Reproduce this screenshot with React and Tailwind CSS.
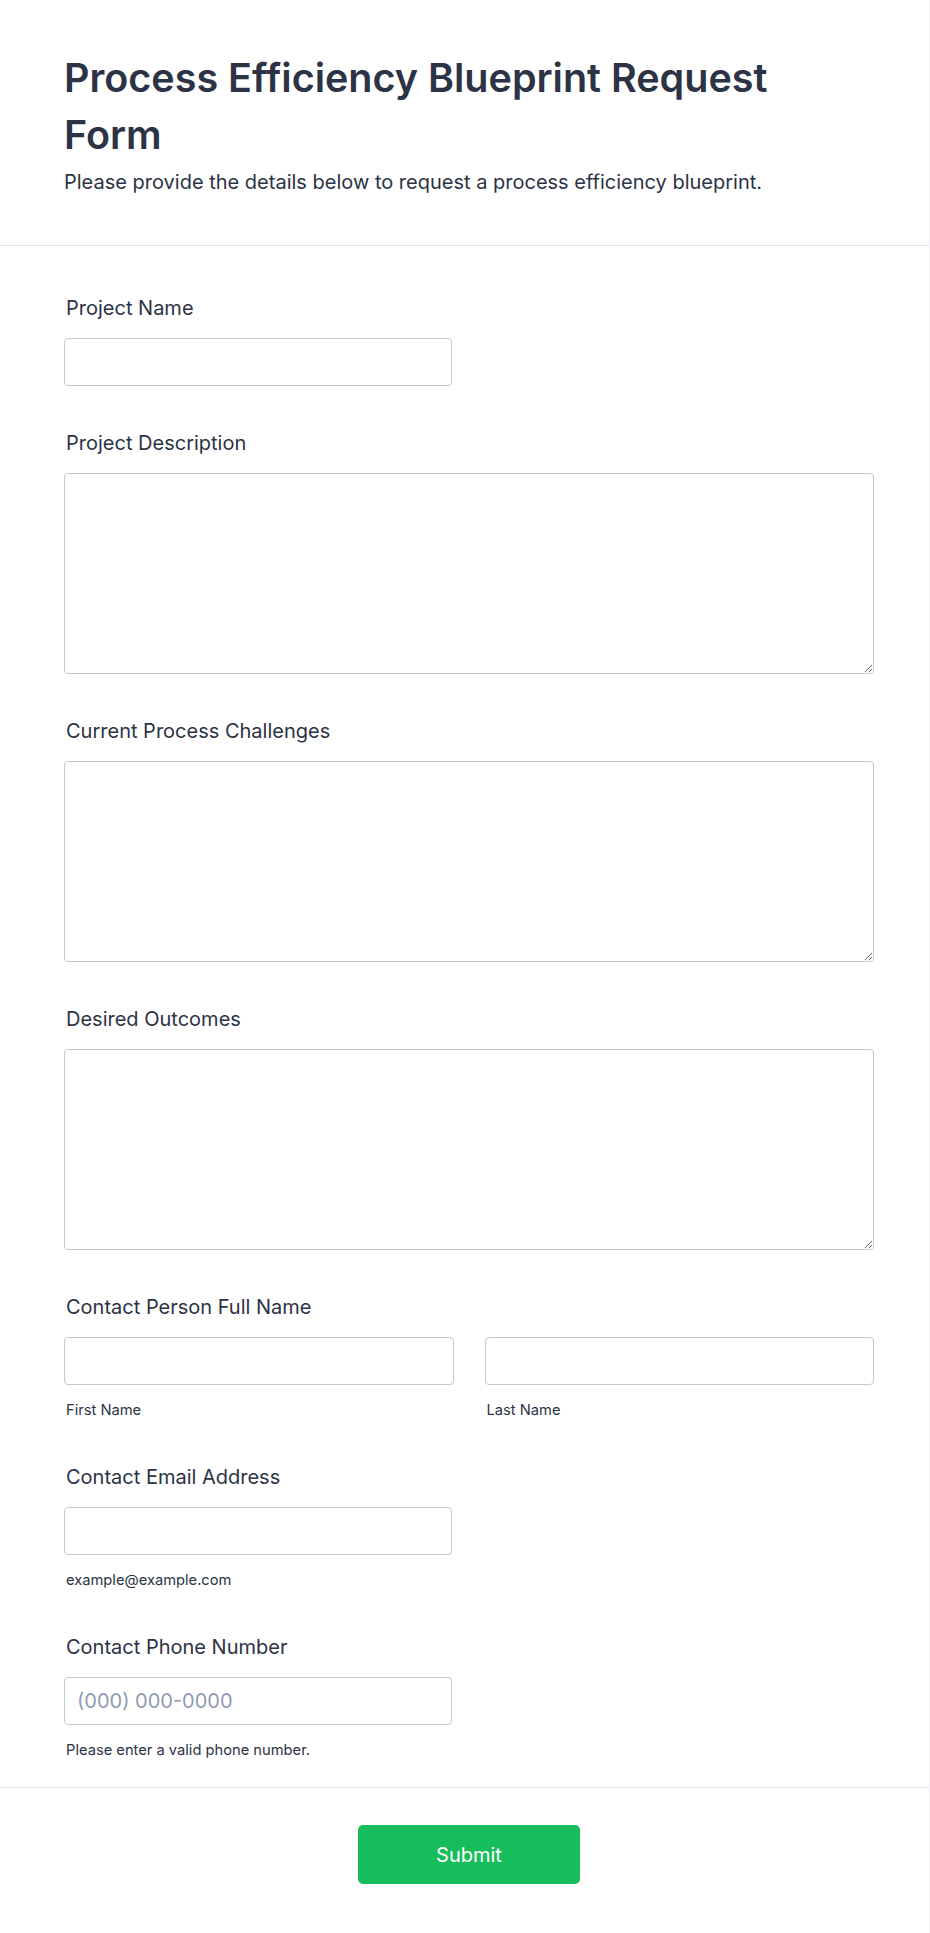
import React from "react";

const font = { fontFamily: "Inter, 'Noto Sans', sans-serif" };

function Label({ children }) {
  return (
    <label className="block pl-[2px] text-[20px] leading-[24px] font-normal text-[#2c3345]">
      {children}
    </label>
  );
}

function Sub({ children }) {
  return (
    <div className="mt-[15px] pl-[2px] text-[14.7px] leading-[20px] text-[#2c3345]">
      {children}
    </div>
  );
}

const inputCls =
  "block h-[48px] rounded-[4px] border border-[#c3c8d4] bg-white px-[12px] text-[20px] text-[#2c3345] outline-none placeholder:text-[#8f9bb3]";

const areaCls =
  "block h-[201px] w-full rounded-[4px] border border-[#c3c8d4] bg-white px-[12px] py-[10px] text-[18px] text-[#2c3345] outline-none";

export default function App() {
  return (
    <div className="min-h-[1933px] w-full bg-white border-r border-b border-[#eef0f5]" style={font}>
      <header className="px-[64px] pt-[50px] pb-[49px] border-b border-[#e1e4eb]">
        <h1 className="max-w-[740px] text-[39.5px] leading-[57px] font-semibold text-[#2c3345]">
          Process Efficiency Blueprint Request Form
        </h1>
        <p className="mt-[5px] text-[20px] leading-[27px] text-[#2c3345]">
          Please provide the details below to request a process efficiency blueprint.
        </p>
      </header>

      <div className="pl-[64px] pr-[55px] pt-[50px] pb-[27px] flex flex-col gap-[45px] border-b border-[#e6e9f1]">
        <div>
          <Label>Project Name</Label>
          <input type="text" className={inputCls + " mt-[18px] w-[388px]"} />
        </div>
        <div>
          <Label>Project Description</Label>
          <textarea className={areaCls + " mt-[18px]"} />
        </div>
        <div>
          <Label>Current Process Challenges</Label>
          <textarea className={areaCls + " mt-[18px]"} />
        </div>
        <div>
          <Label>Desired Outcomes</Label>
          <textarea className={areaCls + " mt-[18px]"} />
        </div>
        <div>
          <Label>Contact Person Full Name</Label>
          <div className="mt-[18px] grid grid-cols-2 gap-[31px]">
            <div>
              <input type="text" className={inputCls + " w-full"} />
              <Sub>First Name</Sub>
            </div>
            <div>
              <input type="text" className={inputCls + " w-full"} />
              <Sub>Last Name</Sub>
            </div>
          </div>
        </div>
        <div>
          <Label>Contact Email Address</Label>
          <input type="email" className={inputCls + " mt-[18px] w-[388px]"} />
          <Sub>example@example.com</Sub>
        </div>
        <div>
          <Label>Contact Phone Number</Label>
          <input
            type="tel"
            placeholder="(000) 000-0000"
            className={inputCls + " mt-[18px] w-[388px]"}
          />
          <Sub>Please enter a valid phone number.</Sub>
        </div>
      </div>

      <div className="pl-[64px] pr-[55px] pt-[37px] pb-[50px] flex justify-center">
        <button
          type="button"
          className="h-[59px] w-[222px] rounded-[5px] bg-[#18bd5b] text-[20px] font-normal text-white"
        >
          Submit
        </button>
      </div>
    </div>
  );
}
